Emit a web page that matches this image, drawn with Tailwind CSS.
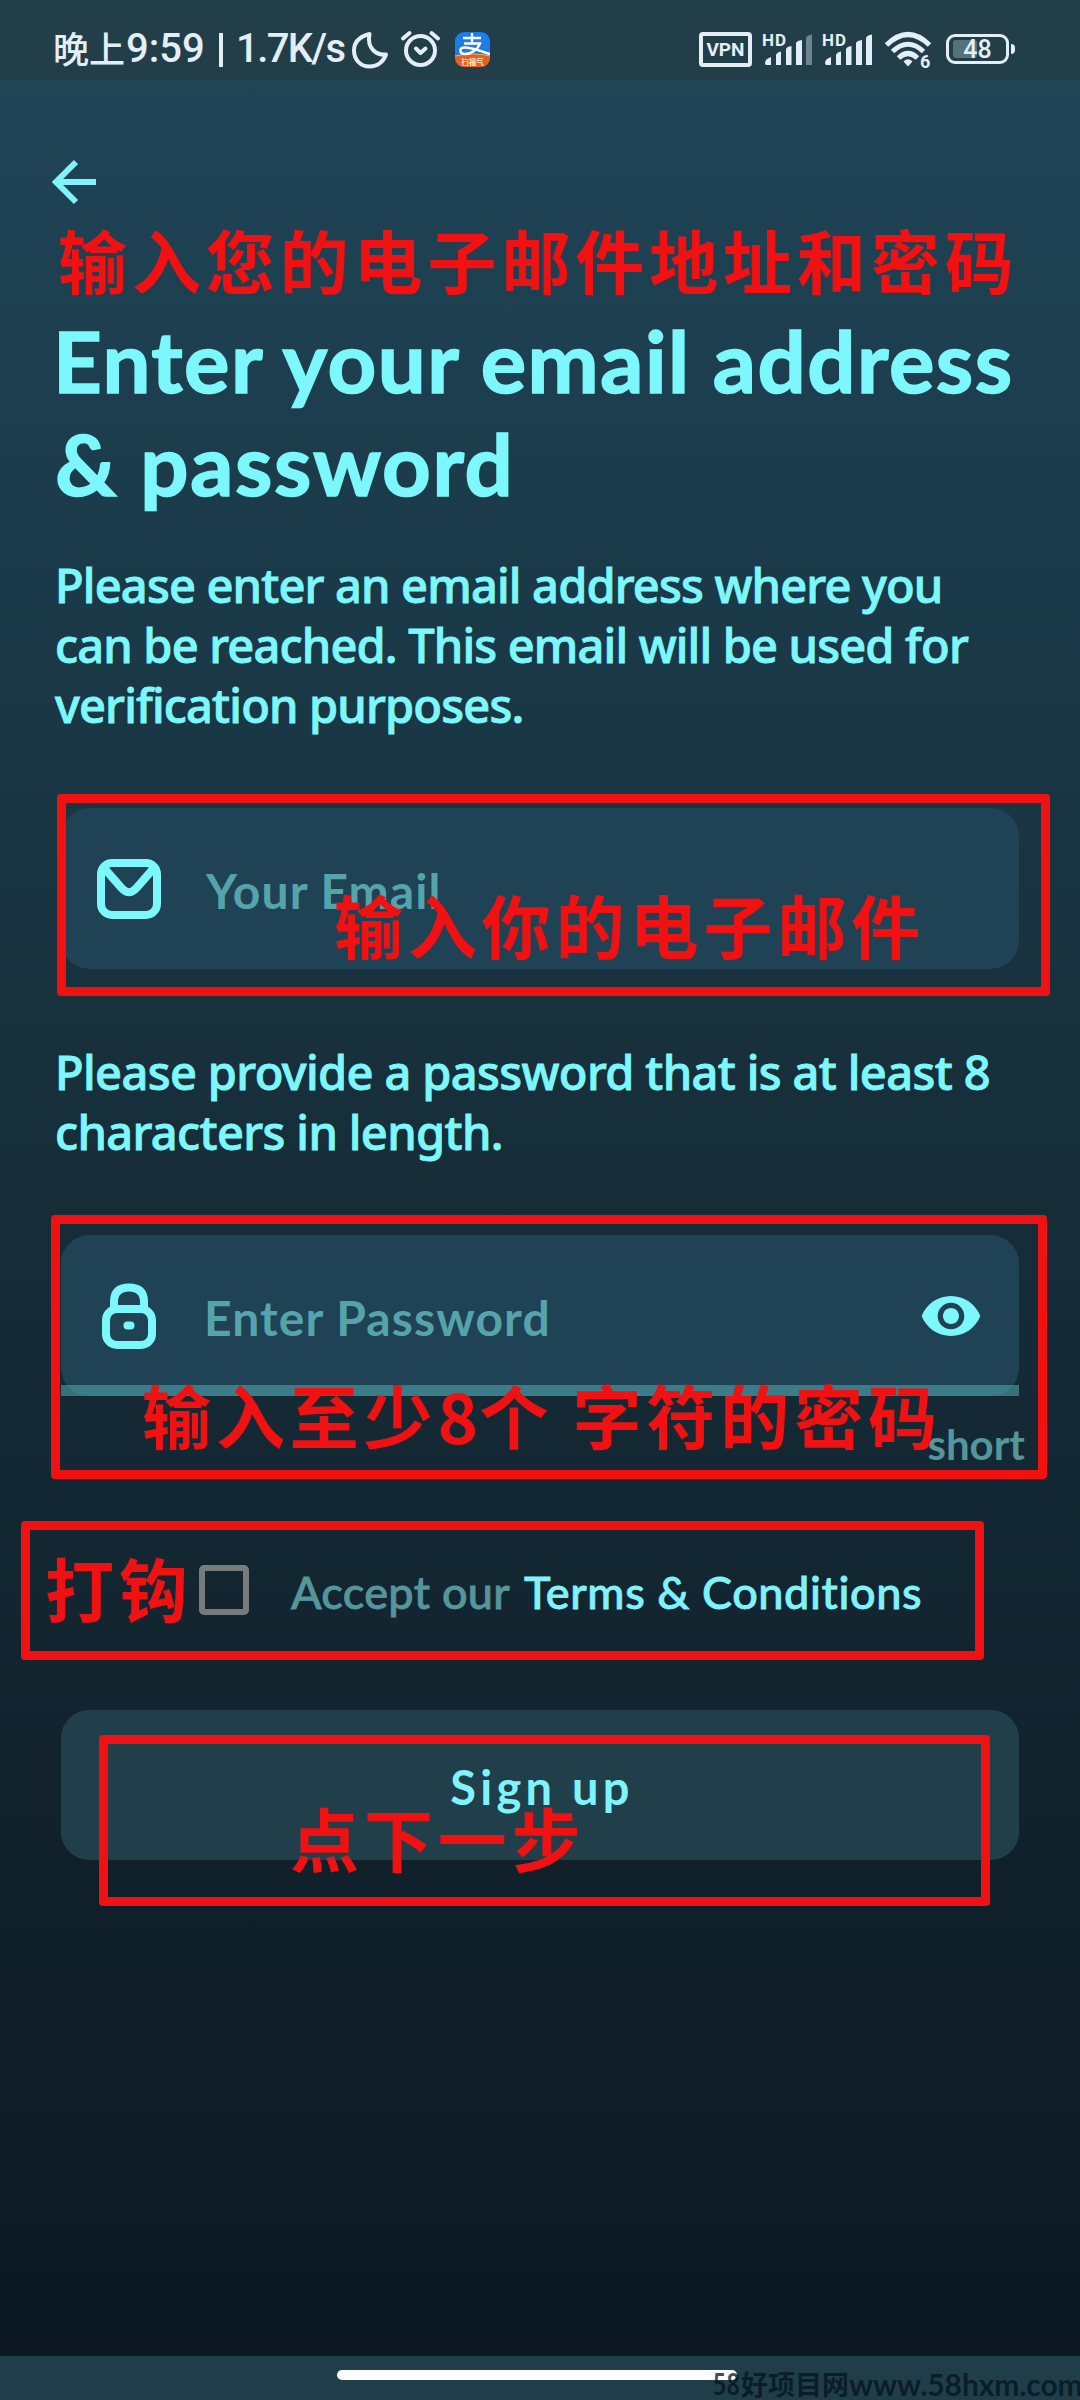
<!DOCTYPE html>
<html lang="en">
<head>
<meta charset="utf-8">
<title>Sign up</title>
<script src="https://cdn.jsdelivr.net/npm/@tailwindcss/browser@4"></script>
</head>
<body class="bg-[#0c1823]">
<div class="relative flex h-[2400px] w-[1080px] flex-col overflow-hidden bg-linear-to-b from-[#1f4557] from-3% via-[#162d38] via-50% to-[#0c1822] to-98% font-['Lato',sans-serif] text-[#7cf8fc]">

  <!-- Status bar -->
  <header class="flex h-20 shrink-0 items-start bg-[#213e49] text-[#e3eef7]">
    <div class="flex h-16 pl-[53px] pt-[29px] font-['Roboto','Noto_Sans_CJK_SC',sans-serif] text-[40px] leading-[40px] font-medium whitespace-nowrap">
      <span class="w-[73px] shrink-0 text-[36px] font-['Noto_Sans_CJK_SC',sans-serif] leading-[36px]">晚上</span>
      <span class="w-[88px] shrink-0">9:59</span>
      <span class="mt-[4px] ml-[5px] h-[34px] w-[4px] shrink-0 bg-[#e3eef7]"></span>
      <span class="ml-[13px] w-[109px] shrink-0 tracking-[-1.6px]">1.7K/s</span>
    </div>
    <svg class="mt-[30px] ml-[4px] h-[40px] w-[40px] shrink-0" viewBox="0 0 40 40" fill="none" stroke="#e3eef7" stroke-width="4" stroke-linejoin="round"><path d="M20.500 4C11 6.500 5 12 5 20.500C5 30 12 36.500 20.500 36.500C28.500 36.500 34.500 31.500 37 24.500C28 25.500 17.500 19 20.500 4Z"/></svg>
    <svg class="mt-[29px] ml-[10px] h-[40px] w-[42px] shrink-0" viewBox="0 0 42 40" fill="none" stroke="#e3eef7" stroke-width="4" stroke-linecap="round"><circle cx="21.500" cy="21.500" r="14.500"/><path d="M4 9.500L10.500 4M39 9.500L32.500 4"/><path d="M17 19.500L21.500 24L26.500 19.500" stroke-linejoin="round"/></svg>
    <svg class="mt-[32px] ml-[14px] h-[36px] w-[36px] shrink-0" viewBox="0 0 36 36"><defs><clipPath id="r"><rect width="35" height="35" rx="9"/></clipPath></defs><g clip-path="url(#r)"><rect width="36" height="36" fill="#1f7be8"/><path d="M0 24Q17 20 36 24V36H0Z" fill="#e8601f"/><path d="M0 24Q17 20 36 24" stroke="#f6b545" fill="none"/><path d="M8 6H26M17 1V11M9 11.500H25C23 17 17 22 10 22C4 22 4 16 9 15.500C16 15 25 19 35 22" fill="none" stroke="#fff" stroke-width="2.400"/></g><text x="17.500" y="32.500" font-size="7.500" font-weight="700" text-anchor="middle" fill="#ffe9d0" font-family="Noto Sans CJK SC">扫福气</text></svg>
    <div class="mt-[32px] ml-[208px] flex h-[35px] w-[53px] shrink-0 items-center justify-center rounded-[4px] border-[4px] border-[#e3eef7] font-['Roboto',sans-serif] text-[19px] font-bold leading-none">VPN</div>
    <svg class="mt-[30px] ml-[10px] h-[40px] w-[52px] shrink-0" viewBox="0 0 52 40" fill="#e3eef7"><text x="0" y="15.500" font-size="17" font-weight="700" font-family="Roboto" textLength="24">HD</text><path d="M3 33Q3 29 9 27V35H4.500Q3 35 3 33ZM14 25Q15 22 19 21.500V35H14ZM24 19Q25 16.500 29.500 16V35H24ZM34 13Q35 10.500 40 10V35H34Z"/><path d="M44 8Q45 5 50 4.500V35H44Z" opacity=".4"/></svg>
    <svg class="mt-[30px] ml-[8px] h-[40px] w-[52px] shrink-0" viewBox="0 0 52 40" fill="#e3eef7"><text x="0" y="15.500" font-size="17" font-weight="700" font-family="Roboto" textLength="24">HD</text><path d="M3 33Q3 29 9 27V35H4.500Q3 35 3 33ZM14 25Q15 22 19 21.500V35H14ZM24 19Q25 16.500 29.500 16V35H24ZM34 13Q35 10.500 40 10V35H34ZM44 8Q45 5 50 4.500V35H44Z"/></svg>
    <svg class="mt-[30px] ml-[10px] h-[40px] w-[50px] shrink-0" viewBox="0 0 50 40" fill="none" stroke="#e3eef7" stroke-width="5"><path d="M2.500 15Q24 -6 45.500 15M8.500 21.500Q24 7 39.500 21.500M14.500 28Q24 19 33.500 28"/><path d="M19.500 31.500Q24 27 28.500 31.500L24 36.500Z" fill="#e3eef7" stroke="none"/><text x="36" y="38" font-size="18" font-weight="700" font-family="Roboto" fill="#e3eef7" stroke="none">6</text></svg>
    <div class="relative mt-[34px] ml-[12px] flex h-[30px] w-[63px] shrink-0 items-center justify-center rounded-[9px] border-[3px] border-[#e3eef7]">
      <span class="absolute top-[3px] left-[4px] h-[18px] w-[24px] rounded-[3px] bg-[#52737a]"></span>
      <span class="relative font-['Roboto',sans-serif] text-[25px] leading-none font-medium">48</span>
    </div>
    <span class="mt-[44px] ml-[2px] h-[10px] w-[4px] shrink-0 rounded-r-sm bg-[#e3eef7]"></span>
  </header>

  <main class="flex flex-1 flex-col px-[55px]">
    <svg class="mt-[78px] -ml-[5px] h-[48px] w-[48px] shrink-0" viewBox="0 0 48 48" fill="none" stroke="#80f3fa" stroke-width="6"><path d="M26 4L6 24L26 44M5 24H46" /></svg>

    <h1 class="mt-[103px] h-[206px] text-[85px] leading-[103px] font-bold tracking-[1.5px] whitespace-nowrap [-webkit-text-stroke:1.5px_#7cf8fc]"><span class="-ml-[2px] block">Enter your email address</span><span class="block tracking-[1.6px]">&amp; password</span></h1>

    <p class="mt-[40px] h-[180px] font-['Noto_Sans',sans-serif] text-[47px] leading-[60px] font-medium tracking-[-0.83px] whitespace-nowrap [-webkit-text-stroke:0.9px_#7cf8fc]">Please enter an email address where you<br>can be reached. This email will be used for<br>verification purposes.</p>

    <div class="mt-[73px] ml-[6px] flex h-[161px] w-[958px] items-center rounded-[28px] bg-[#204255]">
      <svg class="ml-[36px] h-[60px] w-[64px] shrink-0" viewBox="0 0 64 60" fill="none" stroke="#7cf8fc" stroke-width="8" stroke-linejoin="round"><rect x="4" y="4" width="56" height="52" rx="11"/><path d="M7 9L25 29.500Q32 37 39 29.500L57 9"/></svg>
      <span class="mt-[4px] ml-[45px] text-[48px] font-bold tracking-[1.1px] text-[#55a4ac]">Your Email</span>
    </div>

    <p class="mt-[73px] h-[120px] font-['Noto_Sans',sans-serif] text-[47px] leading-[60px] font-medium tracking-[-0.63px] whitespace-nowrap [-webkit-text-stroke:0.9px_#7cf8fc]">Please provide a password that is at least 8<br>characters in length.</p>

    <div class="relative mt-[73px] ml-[6px] flex h-[161px] w-[958px] items-center rounded-[28px] bg-[#204255]">
      <svg class="ml-[41px] h-[66px] w-[54px] shrink-0" viewBox="0 0 54 66" fill="none" stroke="#7cf8fc" stroke-width="8"><path d="M12 25V19Q12 4.500 27 4.500Q42 4.500 42 19V25"/><rect x="4" y="26" width="46" height="36" rx="11"/><path d="M25.500 42.500H28.500" stroke-linecap="round"/></svg>
      <span class="mt-[4px] ml-[48px] text-[48px] font-bold tracking-[1.1px] text-[#55a4ac]">Enter Password</span>
      <svg class="mr-[36px] ml-auto h-[64px] w-[64px]" viewBox="0 0 24 24" fill="#7cf8fc"><path d="M12 4.500C7 4.500 2.730 7.610 1 12c1.730 4.390 6 7.500 11 7.500s9.270-3.110 11-7.500c-1.730-4.390-6-7.500-11-7.500zM12 17c-2.760 0-5-2.240-5-5s2.240-5 5-5 5 2.240 5 5-2.240 5-5 5zm0-8c-1.660 0-3 1.340-3 3s1.340 3 3 3 3-1.340 3-3-1.340-3-3-3z"/></svg>
      <span class="absolute inset-x-0 bottom-0 h-[11px] bg-[#4fa4ab]/60"></span>
    </div>
    <div class="mt-[22px] flex h-[52px] justify-end text-[42px] leading-[52px] font-bold text-[#55969c]">short</div>

    <div class="mt-[94px] ml-[144px] flex h-[52px] items-center text-[45px] font-medium whitespace-nowrap">
      <span class="h-[50px] w-[50px] shrink-0 rounded-[5px] border-[6px] border-[#777b7b]"></span>
      <span class="mt-[5px] ml-[42px] w-[233px] tracking-[0.3px] text-[#55969c] [-webkit-text-stroke:0.8px_#55969c]">Accept our</span>
      <span class="mt-[5px] tracking-[0.6px] text-[#80f3fa] [-webkit-text-stroke:0.8px_#80f3fa]">Terms &amp; Conditions</span>
    </div>

    <button class="mt-[94px] ml-[6px] h-[150px] w-[958px] rounded-[28px] bg-[#203f4b] pt-[4px] pl-1 text-[47px] font-bold tracking-[4.3px] text-[#80f3fa]">Sign up</button>
  </main>

  <!-- Gesture bar -->
  <footer class="flex h-[44px] shrink-0 justify-center bg-[#203e4a]">
    <span class="mt-[14px] -ml-[7px] h-[10px] w-[400px] rounded-full bg-white"></span>
  </footer>
  <div class="absolute top-[2368px] left-[713px] flex h-[32px] items-center text-[30px] leading-[32px] font-bold whitespace-nowrap text-[#05121a]/75">
    <span class="w-[28px] font-['Open_Sans',sans-serif] font-semibold [font-stretch:75%]">58</span>
    <span class="font-['Noto_Sans_CJK_SC',sans-serif] text-[27px] leading-[32px]">好项目网</span>
    <span class="tracking-[-0.1px]">www.58hxm.com</span>
  </div>

  <!-- Tutorial annotations drawn over the form -->
  <div class="absolute inset-0 font-['Noto_Sans_CJK_SC',sans-serif] text-[69px] leading-[70px] font-bold tracking-[4.9px] whitespace-nowrap text-[#f01212]">
    <div class="absolute top-[794px] left-[57px] h-[202px] w-[993px] rounded-[4px] border-[9px] border-[#f01212]"></div>
    <div class="absolute top-[1215px] left-[51px] h-[264px] w-[996px] rounded-[4px] border-[9px] border-[#f01212]"></div>
    <div class="absolute top-[1521px] left-[21px] h-[139px] w-[963px] rounded-[4px] border-[9px] border-[#f01212]"></div>
    <div class="absolute top-[1735px] left-[99px] h-[171px] w-[891px] rounded-[4px] border-[9px] border-[#f01212]"></div>
    <div class="absolute top-[224px] left-[58px]">输入您的电子邮件地址和密码</div>
    <div class="absolute top-[889px] left-[334px]">输入你的电子邮件</div>
    <div class="absolute top-[1379px] left-[142px] flex">输入至少<span class="w-[42px]">8</span>个<span class="ml-[19px]">字符的密码</span></div>
    <div class="absolute top-[1552px] left-[45px]">打钩</div>
    <div class="absolute top-[1802px] left-[290px]">点下一步</div>
  </div>
</div>
</body>
</html>
